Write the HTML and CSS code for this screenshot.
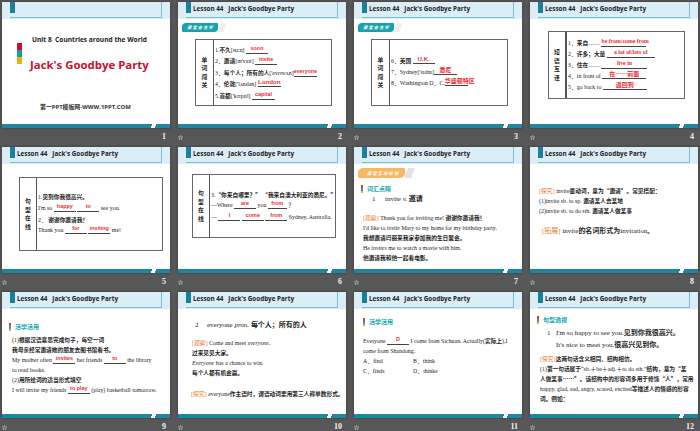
FILE: index.html
```html
<!DOCTYPE html>
<html lang="en">
<head>
<meta charset="utf-8">
<title>Jack's Goodbye Party</title>
<link rel="stylesheet" href="styles.css">
</head>
<body>
<main class="grid">

<section class="cell">
  <div class="slide">
    <header class="band"><div class="band-box"><i class="band-mark"></i></div></header>
    <div class="content cover">
      <div class="cover-main">
        <div class="cover-blocks"><i class="cb-red"></i><i class="cb-teal"></i><i class="cb-orange"></i></div>
        <div class="cover-text">
          <p class="cover-unit">Unit 8&nbsp; Countries around the World</p>
          <h1 class="cover-title">Jack's Goodbye Party</h1>
        </div>
      </div>
      <p class="cover-site">第一PPT模板网-WWW.1PPT.COM</p>
    </div>
    <div class="bar"></div>
  </div>
  <footer class="foot"><span></span><span class="num">1</span></footer>
</section>

<section class="cell">
  <div class="slide">
    <header class="band"><div class="band-box"><i class="band-mark"></i><span class="lesson">Lesson 44 &nbsp; Jack's Goodbye Party</span></div></header>
    <div class="content">
      <div class="tag-row"><span class="tag">课堂自主学</span><i class="tag-tail"></i></div>
      <div class="tbl t2">
        <div class="tbl-h">单<br>词<br>闯<br>关</div>
        <div class="tbl-b">
          <p>1.<b>不久</b>[su:n] <span class="bl w22">soon</span></p>
          <p>2．<b>邀请</b>[ɪn'vaɪt] <span class="bl w22">invite</span></p>
          <p>3．<b>每个人；所有的人</b>['evrɪwʌn]<span class="bl w23">everyone</span></p>
          <p>4．<b>伦敦</b>['lʌndən] <span class="bl w23 lg">London</span></p>
          <p>5.<b>首都</b>['kæpɪtl] <span class="bl w23">capital</span></p>
        </div>
      </div>
    </div>
    <div class="bar"></div>
  </div>
  <footer class="foot"><svg class="star" viewBox="0 0 8 8"><path d="M4 .5 5 3h2.6L5.5 4.6l.8 2.8L4 5.8 1.7 7.4l.8-2.8L.4 3H3z"/></svg><span class="num">2</span></footer>
</section>

<section class="cell">
  <div class="slide">
    <header class="band"><div class="band-box"><i class="band-mark"></i><span class="lesson">Lesson 44 &nbsp; Jack's Goodbye Party</span></div></header>
    <div class="content">
      <div class="tag-row"><span class="tag">课堂自主学</span><i class="tag-tail"></i></div>
      <div class="tbl t2">
        <div class="tbl-h">单<br>词<br>闯<br>关</div>
        <div class="tbl-b">
          <p>6．<b>英国</b> <span class="bl w22 lg">U.K.</span></p>
          <p>7．Sydney['sɪdnɪ]<span class="bl w23 zh">悉尼</span></p>
          <p>8．Washington D．C.<span class="bl w23 zh">华盛顿特区</span></p>
        </div>
      </div>
    </div>
    <div class="bar"></div>
  </div>
  <footer class="foot"><svg class="star" viewBox="0 0 8 8"><path d="M4 .5 5 3h2.6L5.5 4.6l.8 2.8L4 5.8 1.7 7.4l.8-2.8L.4 3H3z"/></svg><span class="num">3</span></footer>
</section>

<section class="cell">
  <div class="slide">
    <header class="band"><div class="band-box"><i class="band-mark"></i><span class="lesson">Lesson 44 &nbsp; Jack's Goodbye Party</span></div></header>
    <div class="content">
      <div class="tbl t4">
        <div class="tbl-h">短<br>语<br>互<br>译</div>
        <div class="tbl-b">
          <p>1．<b>来自</b>…… <span class="bl w45">be from/come from</span></p>
          <p>2．<b>许多；大量</b> <span class="bl w48">a lot of/lots of</span></p>
          <p>3．<b>住在</b>…… <span class="bl w46">live in</span></p>
          <p>4．in front of <span class="bl w44 zh">在……前面</span></p>
          <p>5．go back to <span class="bl w44 zh">返回到</span></p>
        </div>
      </div>
    </div>
    <div class="bar"></div>
  </div>
  <footer class="foot"><svg class="star" viewBox="0 0 8 8"><path d="M4 .5 5 3h2.6L5.5 4.6l.8 2.8L4 5.8 1.7 7.4l.8-2.8L.4 3H3z"/></svg><span class="num">4</span></footer>
</section>

<section class="cell">
  <div class="slide">
    <header class="band"><div class="band-box"><i class="band-mark"></i><span class="lesson">Lesson 44 &nbsp; Jack's Goodbye Party</span></div></header>
    <div class="content">
      <div class="tbl t5">
        <div class="tbl-h">句<br>型<br>在<br>线</div>
        <div class="tbl-b">
          <p>1.<b>见到你我很高兴。</b></p>
          <p>I'm so <span class="bl w22">happy</span> <span class="bl w22">to</span> see you.</p>
          <p>2． <b>谢谢你邀请我！</b></p>
          <p>Thank you <span class="bl w22">for</span> <span class="bl w22">inviting</span> me!</p>
        </div>
      </div>
    </div>
    <div class="bar"></div>
  </div>
  <footer class="foot"><svg class="star" viewBox="0 0 8 8"><path d="M4 .5 5 3h2.6L5.5 4.6l.8 2.8L4 5.8 1.7 7.4l.8-2.8L.4 3H3z"/></svg><span class="num">5</span></footer>
</section>

<section class="cell">
  <div class="slide">
    <header class="band"><div class="band-box"><i class="band-mark"></i><span class="lesson">Lesson 44 &nbsp; Jack's Goodbye Party</span></div></header>
    <div class="content">
      <div class="tbl t6">
        <div class="tbl-h">句<br>型<br>在<br>线</div>
        <div class="tbl-b">
          <p>3.<b>“你来自哪里？” “我来自澳大利亚的悉尼。”</b></p>
          <p>—Where <span class="bl w22">are</span> you <span class="bl w19">from</span> ？</p>
          <p>— <span class="bl w22">I</span> <span class="bl w22">come</span> <span class="bl w22">from</span> Sydney, Australia.</p>
        </div>
      </div>
    </div>
    <div class="bar"></div>
  </div>
  <footer class="foot"><svg class="star" viewBox="0 0 8 8"><path d="M4 .5 5 3h2.6L5.5 4.6l.8 2.8L4 5.8 1.7 7.4l.8-2.8L.4 3H3z"/></svg><span class="num">6</span></footer>
</section>

<section class="cell">
  <div class="slide">
    <header class="band"><div class="band-box"><i class="band-mark"></i><span class="lesson">Lesson 44 &nbsp; Jack's Goodbye Party</span></div></header>
    <div class="content">
      <div class="tag-row"><span class="tag tag-o">课堂互动探究</span><i class="tag-tail tail-o"></i></div>
      <div class="sec s7"><i class="sec-bar"></i>词汇点睛</div>
      <p class="head h7"><span class="head-n">1</span>invite <i>v.</i> <b class="big">邀请</b></p>
      <div class="lines l7">
        <p><em>[观察]</em> Thank you for <i>inviting</i> me! <b>谢谢你邀请我！</b></p>
        <p>I'd like to <i>invite</i> Mary to my home for my birthday party.</p>
        <p><b>我想邀请玛丽来我家参加我的生日聚会。</b></p>
        <p>He <i>invites</i> me to watch a movie with him.</p>
        <p><b>他邀请我和他一起看电影。</b></p>
      </div>
    </div>
    <div class="bar"></div>
  </div>
  <footer class="foot"><svg class="star" viewBox="0 0 8 8"><path d="M4 .5 5 3h2.6L5.5 4.6l.8 2.8L4 5.8 1.7 7.4l.8-2.8L.4 3H3z"/></svg><span class="num">7</span></footer>
</section>

<section class="cell">
  <div class="slide">
    <header class="band"><div class="band-box"><i class="band-mark"></i><span class="lesson">Lesson 44 &nbsp; Jack's Goodbye Party</span></div></header>
    <div class="content">
      <div class="lines l8">
        <p><em>[探究]</em> invite<b>是动词，意为“邀请”。常见搭配：</b></p>
        <p>(1)invite sb. to sp. <b>邀请某人去某地</b></p>
        <p>(2)invite sb. to do sth. <b>邀请某人做某事</b></p>
      </div>
      <p class="expand"><em>[拓展]</em> invite<b class="big">的名词形式为</b>invitation<b>。</b></p>
    </div>
    <div class="bar"></div>
  </div>
  <footer class="foot"><svg class="star" viewBox="0 0 8 8"><path d="M4 .5 5 3h2.6L5.5 4.6l.8 2.8L4 5.8 1.7 7.4l.8-2.8L.4 3H3z"/></svg><span class="num">8</span></footer>
</section>

<section class="cell">
  <div class="slide">
    <header class="band"><div class="band-box"><i class="band-mark"></i><span class="lesson">Lesson 44 &nbsp; Jack's Goodbye Party</span></div></header>
    <div class="content">
      <div class="sec s9"><i class="sec-bar"></i>活学活用</div>
      <div class="lines l9">
        <p>(1)<b>根据汉语意思完成句子，每空一词</b></p>
        <p><b>我母亲经常邀请她的朋友去图书馆看书。</b></p>
        <p>My mother often <span class="bl w22">invites</span> her friends <span class="bl w22">to</span> the library</p>
        <p>to read books.</p>
        <p>(2)<b>用所给词的适当形式填空</b></p>
        <p>I will invite my friends <span class="bl w22">to play</span> (play) basketball tomorrow.</p>
      </div>
    </div>
    <div class="bar"></div>
  </div>
  <footer class="foot"><svg class="star" viewBox="0 0 8 8"><path d="M4 .5 5 3h2.6L5.5 4.6l.8 2.8L4 5.8 1.7 7.4l.8-2.8L.4 3H3z"/></svg><span class="num">9</span></footer>
</section>

<section class="cell">
  <div class="slide">
    <header class="band"><div class="band-box"><i class="band-mark"></i><span class="lesson">Lesson 44 &nbsp; Jack's Goodbye Party</span></div></header>
    <div class="content">
      <p class="head h10"><span class="head-n">2</span>everyone <i>pron.</i> <b class="big">每个人；所有的人</b></p>
      <div class="lines l10">
        <p><em>[观察]</em> Come and meet <i>everyone</i>.</p>
        <p><b>过来见见大家。</b></p>
        <p><i>Everyone</i> has a chance to win.</p>
        <p><b>每个人都有机会赢。</b></p>
      </div>
      <p class="note"><em>[探究]</em> everyone<b>作主语时，谓语动词要用第三人称单数形式。</b></p>
    </div>
    <div class="bar"></div>
  </div>
  <footer class="foot"><svg class="star" viewBox="0 0 8 8"><path d="M4 .5 5 3h2.6L5.5 4.6l.8 2.8L4 5.8 1.7 7.4l.8-2.8L.4 3H3z"/></svg><span class="num">10</span></footer>
</section>

<section class="cell">
  <div class="slide">
    <header class="band"><div class="band-box"><i class="band-mark"></i><span class="lesson">Lesson 44 &nbsp; Jack's Goodbye Party</span></div></header>
    <div class="content">
      <div class="sec s11"><i class="sec-bar"></i>活学活用</div>
      <div class="lines l11">
        <p>Everyone <span class="bl w22">D</span> I come from Sichuan. Actually(<b>实际上</b>),I</p>
        <p>come from Shandong.</p>
        <p class="opts"><span>A．find</span><span>B．think</span></p>
        <p class="opts"><span>C．finds</span><span>D．thinks</span></p>
      </div>
    </div>
    <div class="bar"></div>
  </div>
  <footer class="foot"><svg class="star" viewBox="0 0 8 8"><path d="M4 .5 5 3h2.6L5.5 4.6l.8 2.8L4 5.8 1.7 7.4l.8-2.8L.4 3H3z"/></svg><span class="num">11</span></footer>
</section>

<section class="cell">
  <div class="slide">
    <header class="band"><div class="band-box"><i class="band-mark"></i><span class="lesson">Lesson 44 &nbsp; Jack's Goodbye Party</span></div></header>
    <div class="content">
      <div class="sec s12"><i class="sec-bar"></i>句型透视</div>
      <p class="head h12"><span class="head-n">1</span>I'm so happy to see you.<b class="big">见到你我很高兴。</b></p>
      <p class="head h12b">It's nice to meet you.<b class="big">很高兴见到你。</b></p>
      <div class="lines l12">
        <p><em>[探究]</em><b>这两句话含义相同、结构相仿。</b></p>
        <p>(1)<b>第一句话属于</b>“sb.＋be＋adj.＋to do sth.”<b>结构，意为“某</b></p>
        <p><b>人做某事……”。该结构中的形容词多用于修饰“人”，常用</b></p>
        <p>happy, glad, sad, angry, scared, excited<b>等描述人的情感的形容</b></p>
        <p><b>词。例如：</b></p>
      </div>
    </div>
    <div class="bar"></div>
  </div>
  <footer class="foot"><svg class="star" viewBox="0 0 8 8"><path d="M4 .5 5 3h2.6L5.5 4.6l.8 2.8L4 5.8 1.7 7.4l.8-2.8L.4 3H3z"/></svg><span class="num">12</span></footer>
</section>

</main>
</body>
</html>
```

FILE: styles.css
```css
* { box-sizing: border-box; margin: 0; padding: 0; }
html, body { width: 700px; height: 431px; overflow: hidden; }
body { background: #575757; font-family: "Liberation Serif", "Noto Sans CJK SC", serif; color: #1c1c1c; }

.grid { display: grid; grid-template-columns: repeat(4, 168px); column-gap: 8px; grid-auto-rows: 145px; padding: 2px 0 0 2px; }
.cell { display: flex; flex-direction: column; }

.slide { width: 168px; height: 126px; background: #fff; display: flex; flex-direction: column; box-shadow: 0 0 2px #333; overflow: hidden; }
.content { flex: 1; min-height: 0; font-size: 5.9px; line-height: 10px; }
.content p { white-space: nowrap; }
.content b { font-family: "Noto Sans CJK SC", sans-serif; font-weight: 700; font-size: 5.7px; }

.band { height: 17px; flex: none; background: #dbeef8; padding: 0 8px; }
.band-box { height: 16px; border-right: 1px solid #7dbccb; border-bottom: 1px solid #7dbccb; position: relative; padding-left: 7px; display: flex; align-items: flex-start; }
.band-mark { width: 5px; height: 11px; background: #1c7f9b; position: absolute; left: 0; top: 0; }
.lesson { font: 700 6.3px/13px "Open Sans", "Liberation Sans", sans-serif; color: #222; white-space: nowrap; }

.bar { height: 4px; flex: none; background: linear-gradient(115deg, #1d86a2 0 88.5%, #fff 88.5% 90.8%, #1d86a2 90.8%); }

.foot { height: 19px; display: flex; justify-content: space-between; align-items: flex-start; padding: 4px 4px 0 0; }
.num { font: 700 8px/10px "Liberation Serif", serif; color: #f2f2f2; }
.star { width: 5px; height: 5px; margin-top: 3px; fill: none; stroke: #c4c4c4; stroke-width: 1; }

/* cover */
.cover { display: flex; flex-direction: column; }
.cover-main { display: flex; gap: 8px; padding: 15px 0 0 15px; }
.cover-blocks { display: flex; flex-direction: column; padding-top: 9px; }
.cover-blocks i { width: 5px; height: 7px; display: block; }
.cb-red { background: #c8102e; }
.cb-teal { background: #12a0a8; }
.cb-orange { background: #f5ab12; }
.cover-unit { font: 700 6.6px/12px "Open Sans", sans-serif; color: #222; padding-left: 2px; }
.cover-title { font: 700 11.4px/16px "Open Sans", sans-serif; color: #c5132f; margin-top: 11px; white-space: nowrap; }
.cover-site { font: 700 5.9px/10px "Open Sans", "Noto Sans CJK SC", sans-serif; color: #333; margin: 29px 0 0 38px; }

/* tags */
.tag-row { display: flex; align-items: center; padding-left: 4px; height: 17px; margin-bottom: -17px; }
.tag { height: 9px; background: #16a3ad; color: #fff; font: italic 700 4.2px/9px "Noto Sans CJK SC", sans-serif; letter-spacing: 1.2px; padding-left: 5px; width: 36px; border-radius: 4px 1px 4px 1px; white-space: nowrap; }
.tag-o { background: #f7b766; width: 47px; height: 10px; line-height: 10px; padding-left: 9px; border-radius: 5px 1px 5px 1px; }
.tag-tail { width: 6px; height: 9px; background: #efefef; transform: skewX(-20deg); margin-left: 1px; }
.tail-o { height: 10px; width: 7px; background: #e2e2e2; }

/* tables */
.tbl { display: flex; border: 1px solid #666; width: 137px; height: 67px; }
.t2 { margin: 20px 0 0 17px; }
.t4 { margin: 12px 0 0 18px; height: 68px; }
.t5 { margin: 13px 0 0 17px; width: 144px; height: 74px; }
.t6 { margin: 10px 0 0 14px; width: 144px; height: 64px; }
.tbl-h { width: 18px; flex: none; border-right: 1px solid #555; display: flex; align-items: center; justify-content: center; text-align: center; font: 700 5.8px/8.5px "Noto Sans CJK SC", sans-serif; }
.t4 .tbl-h { border-right-width: 2px; }
.t5 .tbl-h, .t6 .tbl-h { width: 17px; }
.tbl-b { flex: 1; display: flex; flex-direction: column; justify-content: center; padding-left: 1px; }
.tbl-b p { line-height: 11.4px; height: 11.4px; }

/* blanks */
.bl { display: inline-block; height: 8px; border-bottom: 1px solid #444; color: #f02a30; font: 700 5.4px/5px "Liberation Sans", "Noto Sans CJK SC", sans-serif; text-align: center; vertical-align: 2px; white-space: nowrap; }
.t4 .bl { font: 700 5.8px/5px "Liberation Serif", "Noto Sans CJK SC", serif; }
.t4 .bl.zh, .bl.zh { font: 700 6px/5px "Noto Sans CJK SC", sans-serif; }
.bl.lg { font-size: 6.2px; }
.w19 { width: 19px; }
.w22 { width: 22px; }
.w23 { width: 23px; }
.w44 { width: 44px; }
.w45 { width: 45px; }
.w46 { width: 46px; }
.w48 { width: 48px; }

/* sections */
.sec { display: flex; align-items: center; color: #17a9b5; font: 700 6px/8px "Noto Sans CJK SC", sans-serif; }
.sec-bar { width: 1.5px; height: 8px; margin-right: 4.5px; background: linear-gradient(#e8344a 0 40%, #17a9b5 40% 70%, #f5ab12 70%); }
.s7 { padding: 21px 0 0 7px; }
.s9 { padding: 14px 0 0 7px; }
.s11 { padding: 9px 0 0 9px; }
.s12 { padding: 7px 0 0 7px; }

.head { font-size: 7px; line-height: 11px; }
.head-n { display: inline-block; }
.content .big { font-size: 7px; }
.h7 { padding-left: 18px; }
.h7 .head-n { width: 13px; }
.h10 { padding: 10px 0 0 17px; }
.h10 .head-n { width: 12px; }
.h12 { padding: 3px 0 0 17px; }
.h12 .head-n { width: 9px; }
.h12b { padding-left: 26px; }

em { font-style: normal; color: #ee7a2c; }
.lines { line-height: 10px; }
.l7 { padding: 8px 0 0 9px; }
.l8 { padding: 22px 0 0 9px; }
.l9 { padding: 4px 0 0 10px; }
.l10 { padding: 7px 0 0 14px; }
.l11 { padding: 10px 0 0 9px; }
.l12 { padding: 3px 0 0 10px; }
.expand { padding: 9px 0 0 12px; font-size: 7px; }
.note { padding: 11px 0 0 13px; }
.opts { display: grid; grid-template-columns: 50px 50px; }
```
